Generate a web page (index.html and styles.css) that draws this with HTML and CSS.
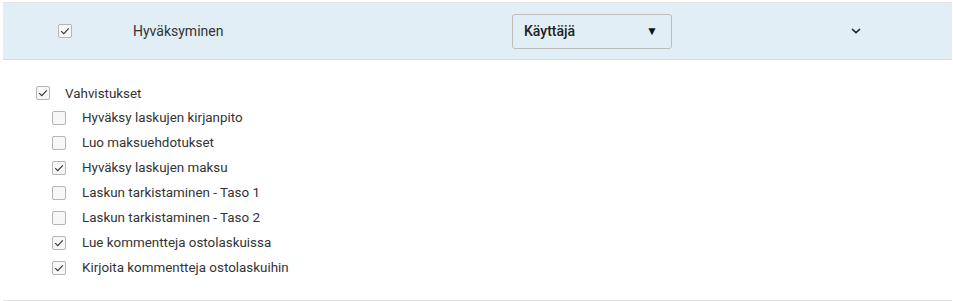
FILE: index.html
```html
<!DOCTYPE html>
<html lang="fi">
<head>
    <meta charset="UTF-8">
    <meta name="viewport" content="width=device-width, initial-scale=1.0">
    <title>Käyttöoikeudet</title>
    <link rel="stylesheet" href="styles.css">
</head>
<body>
    <div class="panel">
        <div class="panel-header">
            <span class="check checked">
                <svg viewBox="0 0 14 14"><path d="M3.2 7.2 L5.8 9.7 L10.8 4.4"/></svg>
            </span>
            <span class="title">Hyväksyminen</span>
            <div class="select">
                <span>Käyttäjä</span>
                <span class="select-arrow">▼</span>
            </div>
            <span class="chevron">
                <svg viewBox="0 0 10 6"><path d="M1 1 L5 4.6 L9 1"/></svg>
            </span>
        </div>

        <!-- oikeuksien lista -->
        <div class="rights">
            <div class="row parent">
                <span class="check checked"><svg viewBox="0 0 14 14"><path d="M3.2 7.2 L5.8 9.7 L10.8 4.4"/></svg></span>
                <span>Vahvistukset</span>
            </div>
            <div class="row child">
                <span class="check"></span>
                <span>Hyväksy laskujen kirjanpito</span>
            </div>
            <div class="row child">
                <span class="check"></span>
                <span>Luo maksuehdotukset</span>
            </div>
            <div class="row child">
                <span class="check checked"><svg viewBox="0 0 14 14"><path d="M3.2 7.2 L5.8 9.7 L10.8 4.4"/></svg></span>
                <span>Hyväksy laskujen maksu</span>
            </div>
            <div class="row child">
                <span class="check"></span>
                <span>Laskun tarkistaminen - Taso 1</span>
            </div>
            <div class="row child">
                <span class="check"></span>
                <span>Laskun tarkistaminen - Taso 2</span>
            </div>
            <div class="row child">
                <span class="check checked"><svg viewBox="0 0 14 14"><path d="M3.2 7.2 L5.8 9.7 L10.8 4.4"/></svg></span>
                <span>Lue kommentteja ostolaskuissa</span>
            </div>
            <div class="row child">
                <span class="check checked"><svg viewBox="0 0 14 14"><path d="M3.2 7.2 L5.8 9.7 L10.8 4.4"/></svg></span>
                <span>Kirjoita kommentteja ostolaskuihin</span>
            </div>
        </div>
    </div>
</body>
</html>
```

FILE: styles.css
```css
body { margin: 0; background: #fff; font-family: Roboto, "Liberation Sans", Arial, sans-serif; color: #333; }
.panel { margin: 2px 1px 0 3px; border-top: 1px solid #e2e2e2; border-bottom: 1px solid #e2e2e2; }
.panel-header {
    display: flex;
    align-items: center;
    height: 56px;
    padding-left: 55px;
    background: #e1eef5;
    border-bottom: 1px solid #dcdcdc;
}
.panel-header .title { width: 379px; margin-left: 61px; font-size: 14px; color: #333; }
.select {
    width: 160px;
    height: 35px;
    box-sizing: border-box;
    display: flex;
    align-items: center;
    justify-content: space-between;
    padding: 0 13px 0 11px;
    background: transparent;
    border: 1px solid #bdbdbd;
    border-radius: 3px;
    font-size: 14px;
    font-weight: 500;
    color: #222;
}
.select-arrow { font-size: 12px; color: #111; }
.chevron { margin-left: 179px; width: 10px; height: 6px; display: flex; }
.chevron svg { width: 10px; height: 6px; fill: none; stroke: #222; stroke-width: 1.6; }

.check {
    width: 14px;
    height: 14px;
    box-sizing: border-box;
    flex: none;
    border: 1px solid #b5b5b5;
    border-radius: 2px;
    background: #f7f7f7;
    display: flex;
    align-items: center;
    justify-content: center;
}
.check svg { width: 14px; height: 14px; flex: none; margin: -1px; fill: none; stroke: #333; stroke-width: 1.1; }

.rights { padding: 21px 0 20px 0; font-size: 13.4px; }
.row { display: flex; align-items: center; height: 25px; }
.row.parent { height: 24px; padding-left: 33px; gap: 15px; }
.row.child { padding-left: 49px; gap: 16px; }
```
